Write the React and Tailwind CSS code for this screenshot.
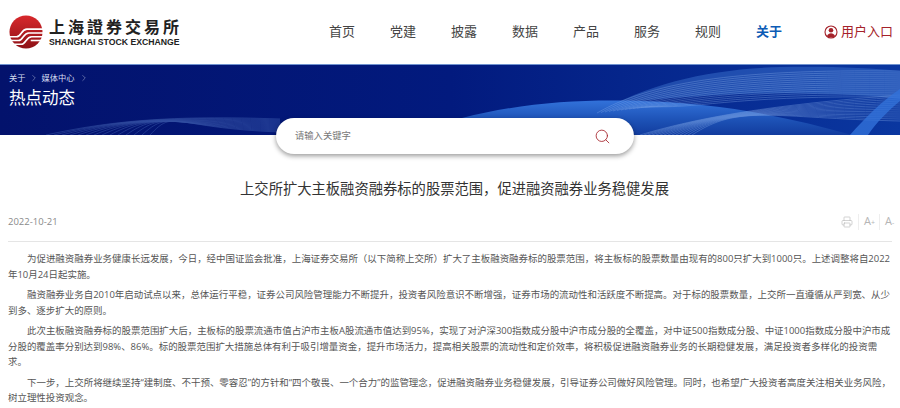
import React from "react";
import { ChevronRight, Search, Printer } from "lucide-react";

const cjk = "font-['Microsoft_YaHei','Open_Sans','Noto_Sans_CJK_SC',sans-serif]";
const nav = ["首页", "党建", "披露", "数据", "产品", "服务", "规则"];

function Logo() {
  return (
    <svg width="34" height="34" viewBox="0 0 36 36" className="shrink-0">
      <defs>
        <linearGradient id="lg" x1="0" y1="0" x2="0" y2="1">
          <stop offset="0" stopColor="#d8282c" />
          <stop offset="1" stopColor="#8e1216" />
        </linearGradient>
      </defs>
      <circle cx="18" cy="18" r="17.5" fill="url(#lg)" />
      <g fill="none" stroke="#fff" strokeWidth="1.7">
        <path d="M0 23h8c5 0 5-8 11-8h17" />
        <path d="M0 27h10c5 0 5-8 11-8h15" />
        <path d="M3 31h10c5 0 5-8 11-8h12" />
        <path d="M23 27h12" />
      </g>
    </svg>
  );
}

function Waves() {
  const lines = Array.from({ length: 14 }, (_, i) => i);
  return (
    <svg className="absolute inset-0 h-full w-full" viewBox="0 0 900 70" preserveAspectRatio="none">
      <defs>
        <linearGradient id="bg" x1="0" y1="0" x2="1" y2="0">
          <stop offset="0" stopColor="#03126c" />
          <stop offset="0.5" stopColor="#021a7e" />
          <stop offset="1" stopColor="#0a37a0" />
        </linearGradient>
        <linearGradient id="crest" x1="0" y1="0" x2="0" y2="1">
          <stop offset="0" stopColor="#3272da" />
          <stop offset="0.6" stopColor="#1c50b4" />
          <stop offset="1" stopColor="#123c9e" />
        </linearGradient>
      </defs>
      <rect width="900" height="70" fill="url(#bg)" />
      <g fill="none" stroke="#6a92da" strokeWidth="0.6" opacity="0.45">
        {lines.map((i) => (
          <path key={i} d={`M${46 + i * 8} 70C${110 + i * 5} ${56 - i} 170 ${50 + i} 280 ${54 + i}`} />
        ))}
      </g>
      <path d="M597 48C650 18 710 4 780 2C830 1 870 3 900 6V34C840 26 730 26 640 36C625 38 610 42 597 48Z" fill="#3a70cc" opacity="0.5" />
      <path d="M462 53C520 38 580 34 640 36C720 38 790 52 852 70H400Z" fill="url(#crest)" />
      <g fill="none" stroke="#8fb4ee" strokeWidth="0.6" opacity="0.55">
        {lines.map((i) => (
          <path key={i} d={`M${597 + i * 4} ${48 - i * 0.5}C${650 + i * 4} ${18 + i * 2} 730 ${4 + i * 2} 900 ${6 + i * 2}`} />
        ))}
        {lines.map((i) => (
          <path key={`b${i}`} d={`M${640 + i * 4} 70C${700 + i * 3} ${52 - i} 770 ${40 + i} 900 ${30 + i * 2}`} />
        ))}
      </g>
      <path d="M850 70C866 52 882 36 900 24V36C888 46 876 58 868 70Z" fill="#3272da" opacity="0.8" />
    </svg>
  );
}

export default function App() {
  return (
    <div className={`w-[900px] h-[408px] overflow-hidden bg-white ${cjk}`}>
      <header className="flex h-[65px] items-center border-b border-[#6f92cf] pr-[7px] pl-[9px]">
        <Logo />
        <div className="ml-[6px] flex w-[131px] flex-col">
          <span className="text-[16px] leading-[20px] font-bold tracking-[3px] whitespace-nowrap text-[#222]">上海證券交易所</span>
          <span className="font-['Liberation_Sans'] text-[8.7px] leading-[10px] font-bold whitespace-nowrap text-[#222]">SHANGHAI STOCK EXCHANGE</span>
        </div>
        <nav className="ml-[149px] flex gap-[35px] text-[13px] text-[#444]">
          {nav.map((n) => (
            <span key={n} className="w-[26px] whitespace-nowrap">{n}</span>
          ))}
          <span className="w-[26px] font-bold whitespace-nowrap text-[#0d5bb5]">关于</span>
        </nav>
        <div className="ml-auto flex items-center gap-[3px] text-[13px] text-[#a5222a]">
          <svg width="14" height="14" viewBox="0 0 14 14" fill="none">
            <circle cx="7" cy="7" r="6" stroke="#a5222a" strokeWidth="1.1" />
            <circle cx="7" cy="5.3" r="2.3" fill="#a5222a" />
            <path d="M3 11c.8-2 2.3-2.8 4-2.8s3.200.8 4 2.800c-1 1-2.500 1.500-4 1.500s-3-.500-4-1.500Z" fill="#a5222a" />
          </svg>
          <span>用户入口</span>
        </div>
      </header>

      <section className="relative h-[70px] overflow-hidden">
        <Waves />
        <div className="relative px-[9px] pt-[7px] text-white">
          <div className="flex items-center gap-[2px] text-[8.25px] leading-[11px] text-[#d5dcf0]">
            <span>关于</span>
            <ChevronRight size={10} strokeWidth={1} className="mx-[1px]" />
            <span>媒体中心</span>
            <ChevronRight size={10} strokeWidth={1} className="ml-[2px]" />
          </div>
          <div className="mt-[4px] text-[16.5px] leading-[22px]">热点动态</div>
        </div>
      </section>

      <div className="relative -mt-[17px] ml-[276px] flex h-[36px] w-[358px] items-center justify-between rounded-[18px] bg-white pr-[23px] pl-[19px] shadow-[0_2px_5px_rgba(0,0,0,0.4)]">
        <span className="text-[9.3px] text-[#777]">请输入关键字</span>
        <Search size={17} strokeWidth={1.2} className="text-[#a5222a]" />
      </div>

      <h1 className="mt-[25px] pl-[9px] text-center text-[14.3px] leading-[20px] whitespace-nowrap text-[#333]">
        上交所扩大主板融资融券标的股票范围，促进融资融券业务稳健发展
      </h1>

      <div className="mx-[8px] mt-[14px] flex h-[29px] items-center justify-between border-b border-[#e5e5e5] pb-[10px]">
        <span className="text-[9.5px] text-[#8a8a8a]">2022-10-21</span>
        <div className="-mr-[4px] flex items-center text-[#b5b5b5]">
          <Printer size={12} strokeWidth={1.2} />
          <span className="ml-[5px] w-[17px] border-l border-[#eee] pl-[5px] text-[11px] leading-[14px] whitespace-nowrap">A<span className="text-[7px]">+</span></span>
          <span className="ml-[4px] w-[17px] border-l border-[#eee] pl-[5px] text-[11px] leading-[14px] whitespace-nowrap">A<span className="text-[7px]">-</span></span>
        </div>
      </div>

      <article className="mx-[8px] mt-[9px] flex flex-col gap-[5px] text-[9.46px] leading-[15.5px] text-[#555]">
        <p className="indent-[19px]">为促进融资融券业务健康长远发展，今日，经中国证监会批准，上海证券交易所（以下简称上交所）扩大了主板融资融券标的股票范围，将主板标的股票数量由现有的800只扩大到1000只。上述调整将自2022年10月24日起实施。</p>
        <p className="indent-[19px]">融资融券业务自2010年启动试点以来，总体运行平稳，证券公司风险管理能力不断提升，投资者风险意识不断增强，证券市场的流动性和活跃度不断提高。对于标的股票数量，上交所一直遵循从严到宽、从少到多、逐步扩大的原则。</p>
        <p className="indent-[19px]">此次主板融资融券标的股票范围扩大后，主板标的股票流通市值占沪市主板A股流通市值达到95%，实现了对沪深300指数成分股中沪市成分股的全覆盖，对中证500指数成分股、中证1000指数成分股中沪市成分股的覆盖率分别达到98%、86%。标的股票范围扩大措施总体有利于吸引增量资金，提升市场活力，提高相关股票的流动性和定价效率，将积极促进融资融券业务的长期稳健发展，满足投资者多样化的投资需求。</p>
        <p className="indent-[19px]">下一步，上交所将继续坚持“建制度、不干预、零容忍”的方针和“四个敬畏、一个合力”的监管理念，促进融资融券业务稳健发展，引导证券公司做好风险管理。同时，也希望广大投资者高度关注相关业务风险，树立理性投资观念。</p>
      </article>
    </div>
  );
}
